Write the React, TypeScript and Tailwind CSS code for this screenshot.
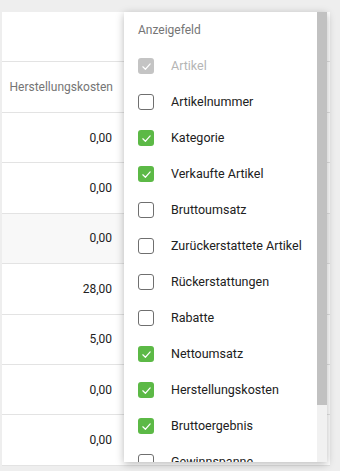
import React from 'react';

type Field = { label: string; checked: boolean; disabled?: boolean };

const fields: Field[] = [
  { label: 'Artikel', checked: true, disabled: true },
  { label: 'Artikelnummer', checked: false },
  { label: 'Kategorie', checked: true },
  { label: 'Verkaufte Artikel', checked: true },
  { label: 'Bruttoumsatz', checked: false },
  { label: 'Zurückerstattete Artikel', checked: false },
  { label: 'Rückerstattungen', checked: false },
  { label: 'Rabatte', checked: false },
  { label: 'Nettoumsatz', checked: true },
  { label: 'Herstellungskosten', checked: true },
  { label: 'Bruttoergebnis', checked: true },
  { label: 'Gewinnspanne', checked: false },
];

const rows = ['0,00', '0,00', '0,00', '28,00', '5,00', '0,00', '0,00'];

const Checkbox: React.FC<{ checked: boolean; disabled?: boolean }> = ({ checked, disabled }) => {
  if (!checked) {
    return <span className="w-[16px] h-[16px] rounded-[3px] border-[1.5px] border-[#6f6f6f] bg-white shrink-0" />;
  }
  return (
    <span
      className={`w-[16px] h-[16px] rounded-[3px] flex items-center justify-center shrink-0 ${
        disabled ? 'bg-[#c4c4c4]' : 'bg-[#5cb946]'
      }`}
    >
      <svg width="11" height="11" viewBox="0 0 12 12" fill="none">
        <path d="M2 6.3 L4.8 9 L10 3.2" stroke="white" strokeWidth="1.3" strokeLinecap="round" strokeLinejoin="round" />
      </svg>
    </span>
  );
};

export default function App() {
  return (
    <div className="relative w-[340px] h-[471px] bg-[#eeeeee] overflow-hidden font-['Roboto',sans-serif]">
      {/* Table */}
      <div className="ml-[2px] mt-[12px] w-[328px] bg-white">
        <div className="h-[50px] border-b border-[#e3e3e3]" />
        <div className="h-[51px] border-b border-[#e3e3e3] flex items-center">
          <span className="w-[111px] text-right text-[12px] text-[#757575]">Herstellungskosten</span>
        </div>
        {rows.map((v, i) => (
          <div
            key={i}
            className={`h-[50.4px] border-b border-[#e3e3e3] flex items-center ${i === 2 ? 'bg-[#f8f8f8]' : ''}`}
          >
            <span className="w-[110px] text-right text-[12px] text-[#212121]">{v}</span>
          </div>
        ))}
      </div>

      {/* Field picker popover */}
      <div className="absolute left-[124px] top-[12px] w-[203px] h-[450px] bg-white overflow-hidden shadow-[0_2px_8px_rgba(0,0,0,0.28)]">
        <div className="pr-[10px]">
          <div className="h-[36px] flex items-center pl-[14px] text-[12px] text-[#757575]">Anzeigefeld</div>
          {fields.map((f) => (
            <div key={f.label} className="h-[36px] flex items-center pl-[14px] gap-[17px]">
              <Checkbox checked={f.checked} disabled={f.disabled} />
              <span className={`text-[12.5px] whitespace-nowrap ${f.disabled ? 'text-[#b5b5b5]' : 'text-[#212121]'}`}>
                {f.label}
              </span>
            </div>
          ))}
        </div>
        <div className="absolute right-0 top-0 w-[10px] h-full bg-[#f1f1f1]">
          <div className="w-full h-[393px] bg-[#c1c1c1]" />
        </div>
      </div>
    </div>
  );
}
